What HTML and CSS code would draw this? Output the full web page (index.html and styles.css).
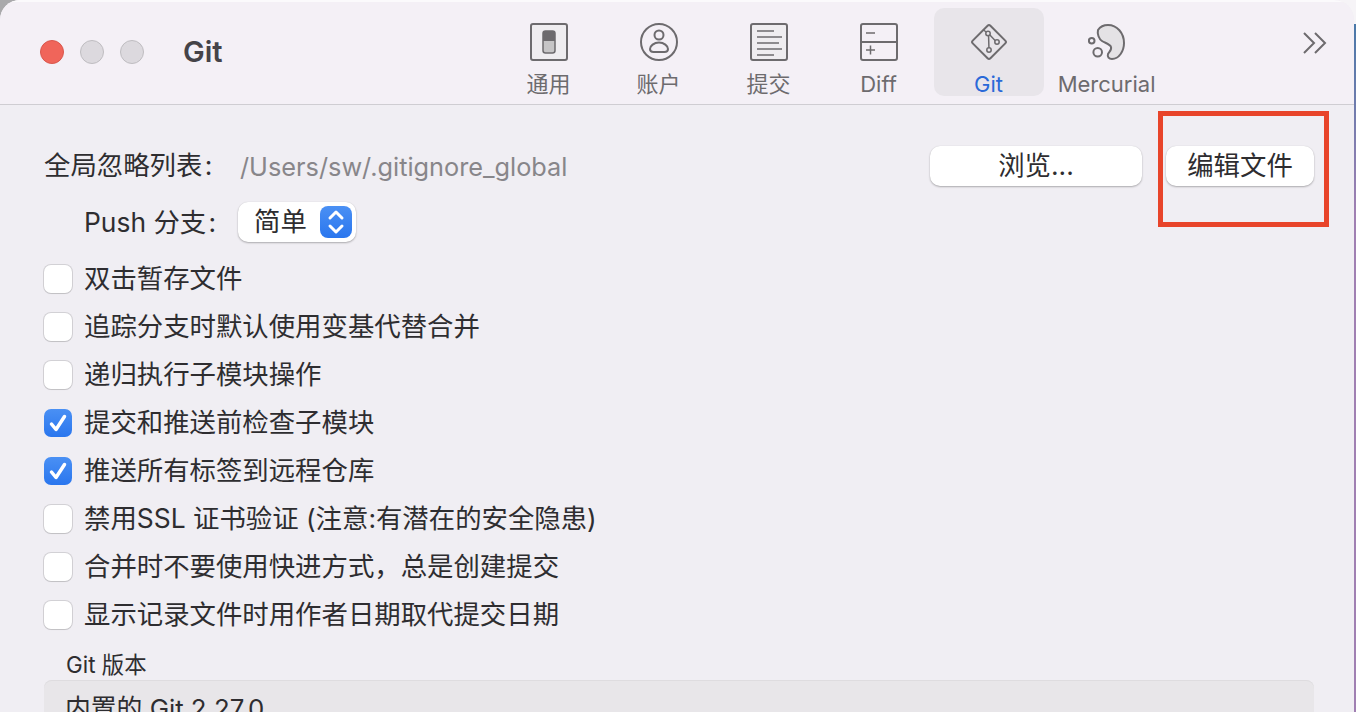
FILE: index.html
```html
<!DOCTYPE html>
<html lang="zh-CN">
<head>
    <meta charset="UTF-8">
    <title>Git</title>
    <link rel="stylesheet" href="styles.css">
</head>
<body>
    <div class="window">
        <header class="toolbar">
            <div class="lights">
                <span class="light light-close"></span>
                <span class="light"></span>
                <span class="light"></span>
            </div>
            <div class="window-title">Git</div>
            <nav class="tabs">
                <div class="tab">
                    <svg class="tab-icon" viewBox="0 0 38 38">
                        <rect x="1" y="1" width="36" height="36" rx="2" fill="#efedf0" stroke="#6d6b6e" stroke-width="2"/>
                        <rect x="13" y="8" width="12" height="22" rx="2.5" fill="#c6c5c6" stroke="#6d6b6e" stroke-width="1.5"/>
                        <path d="M13 18V10.5A2.5 2.5 0 0 1 15.500 8h7a2.500 2.500 0 0 1 2.500 2.500V18z" fill="#6d6b6e"/>
                    </svg>
                    <span class="tab-label">通用</span>
                </div>
                <div class="tab">
                    <svg class="tab-icon" viewBox="0 0 38 38" fill="none" stroke="#6d6b6e" stroke-width="2">
                        <circle cx="19" cy="19" r="18"/>
                        <circle cx="19" cy="12" r="4.500"/>
                        <path d="M19 19.500c-5 0-9 3.500-9 6.500 0 2 1.500 3 3.500 3h11c2 0 3.500-1 3.500-3 0-3-4-6.500-9-6.500z"/>
                    </svg>
                    <span class="tab-label">账户</span>
                </div>
                <div class="tab">
                    <svg class="tab-icon" viewBox="0 0 38 38" fill="none" stroke="#6d6b6e" stroke-width="2">
                        <rect x="1" y="1" width="36" height="36" rx="2" fill="#efedf0"/>
                        <path d="M7 8h17M7 14h25M7 20h22M7 26h25M7 32h17" stroke-width="1.500"/>
                    </svg>
                    <span class="tab-label">提交</span>
                </div>
                <div class="tab">
                    <svg class="tab-icon" viewBox="0 0 38 38" fill="none" stroke="#6d6b6e" stroke-width="2">
                        <rect x="1" y="1" width="36" height="36" rx="2"/>
                        <path d="M1 19h36"/>
                        <path d="M6 10h9M6 27h9M10.500 22.500v9" stroke-width="1.500"/>
                    </svg>
                    <span class="tab-label">Diff</span>
                </div>
                <div class="tab tab-active">
                    <svg class="tab-icon" viewBox="0 0 38 38" fill="none" stroke="#6d6b6e" stroke-width="2">
                        <rect x="6.500" y="6.500" width="25" height="25" rx="2" transform="rotate(45 19 19)"/>
                        <path d="M13 6.500l5 4M18.500 10.500l.5 16.500M18.500 10.500l8 8.500" stroke-width="1.500"/>
                        <circle cx="18" cy="10.500" r="2.200" fill="#e8e5ea" stroke-width="1.500"/>
                        <circle cx="27" cy="19" r="2.200" fill="#e8e5ea" stroke-width="1.500"/>
                        <circle cx="19" cy="27" r="2.200" fill="#e8e5ea" stroke-width="1.500"/>
                    </svg>
                    <span class="tab-label">Git</span>
                </div>
                <div class="tab tab-wide">
                    <svg class="tab-icon" viewBox="0 0 38 38" fill="none" stroke="#6d6b6e" stroke-width="2">
                        <path d="M10 7C12 4 16 2 20 2c9 0 16 8 16 18 0 8-5 16-12 16-3 0-5-2-4-5 1-2 4-4 3-7-1-3-6-4-9-6-3-2-5-7-4-11z" fill="#e4e2e5"/>
                        <circle cx="3.700" cy="17.700" r="2.800"/>
                        <circle cx="9.700" cy="29.300" r="4.300"/>
                    </svg>
                    <span class="tab-label">Mercurial</span>
                </div>
            </nav>
            <svg class="more" viewBox="0 0 26 24" fill="none" stroke="#6d6b6e" stroke-width="2">
                <path d="M2 2l10 10L2 22M13 2l10 10-10 10"/>
            </svg>
        </header>

        <main class="settings">
            <div class="row-ignore">
                <span class="field-label"><span class="cjk-text">全局忽略列表&#8202;:</span></span>
                <span class="path">/Users/sw/.gitignore_global</span>
                <button class="button button-browse"><span class="cjk-text">浏览...</span></button>
                <button class="button button-edit"><span class="cjk-text">编辑文件</span></button>
            </div>
            <div class="row-push">
                <span class="field-label"><span class="cjk-text">Push 分支&#8202;:</span></span>
                <div class="select">
                    <span class="cjk-text">简单</span>
                    <span class="stepper">
                        <svg viewBox="0 0 32 32" fill="none" stroke="#fff" stroke-width="3" stroke-linecap="round" stroke-linejoin="round">
                            <path d="M10 12l6-6 6 6M10 20l6 6 6-6"/>
                        </svg>
                    </span>
                </div>
            </div>
            <ul class="options">
                <li class="option"><span class="check"></span><span class="cjk-text">双击暂存文件</span></li>
                <li class="option"><span class="check"></span><span class="cjk-text">追踪分支时默认使用变基代替合并</span></li>
                <li class="option"><span class="check"></span><span class="cjk-text">递归执行子模块操作</span></li>
                <li class="option"><span class="check check-on"><svg viewBox="0 0 28 28" fill="none" stroke="#fff" stroke-width="3.500" stroke-linecap="round" stroke-linejoin="round"><path d="M7.500 15l4.500 5.500 8.500-13"/></svg></span><span class="cjk-text">提交和推送前检查子模块</span></li>
                <li class="option"><span class="check check-on"><svg viewBox="0 0 28 28" fill="none" stroke="#fff" stroke-width="3.500" stroke-linecap="round" stroke-linejoin="round"><path d="M7.500 15l4.500 5.500 8.500-13"/></svg></span><span class="cjk-text">推送所有标签到远程仓库</span></li>
                <li class="option"><span class="check"></span><span class="cjk-text">禁用SSL 证书验证 (注意:有潜在的安全隐患)</span></li>
                <li class="option"><span class="check"></span><span class="cjk-text">合并时不要使用快进方式，总是创建提交</span></li>
                <li class="option"><span class="check"></span><span class="cjk-text">显示记录文件时用作者日期取代提交日期</span></li>
            </ul>
            <div class="version-title">Git 版本</div>
            <div class="version-box">内置的 Git 2.27.0</div>
        </main>

        <div class="callout"></div>
    </div>
</body>
</html>
```

FILE: styles.css
```css
* {
    box-sizing: border-box;
}

html, body {
    height: 100%;
}

body {
    margin: 0;
    overflow: hidden;
    background:
        linear-gradient(90deg, #a9a9ab 0 50%, #f6f4f7 50%) top / 100% 24px no-repeat,
        linear-gradient(#3f78a8 0, #a07fb2 30%, #a07fb2 100%);
    font-family: Inter, "Noto Sans CJK SC", sans-serif;
    color: #2e2d30;
}

.window {
    position: relative;
    width: 1354px;
    height: 712px;
    overflow: hidden;
    background: #f0eef3;
    border-top-left-radius: 20px;
    border-top-right-radius: 20px;
}

/* toolbar */
.toolbar {
    display: flex;
    align-items: flex-start;
    height: 105px;
    background: #f4f0f6;
    border-top: 2px solid #fbfafc;
    border-bottom: 1px solid #cfcdd2;
}

.lights {
    display: flex;
    gap: 16px;
    margin: 38px 0 0 40px;
}

.light {
    width: 24px;
    height: 24px;
    border-radius: 50%;
    background: #dcd9de;
    border: 1px solid #bfbdc1;
}

.light-close {
    background: #f0655a;
    border-color: #d9574d;
}

.window-title {
    margin: 30px 0 0 39px;
    font-size: 29px;
    line-height: 40px;
    font-weight: 600;
    color: #454348;
}

.tabs {
    display: flex;
    margin: 6px 0 0 271px;
}

.tab {
    display: flex;
    flex-direction: column;
    align-items: center;
    width: 110px;
    height: 88px;
    padding-top: 15px;
    border-radius: 10px;
}

.tab-wide {
    width: 126px;
}

.tab-active {
    background: #e8e5ea;
}

.tab-icon {
    width: 38px;
    height: 38px;
    flex: none;
}

.tab-label {
    margin-top: 8px;
    font-size: 22px;
    line-height: 30px;
    color: #6d6b6e;
    white-space: nowrap;
}

.tab-active .tab-label {
    color: #2a69d8;
}

.more {
    width: 26px;
    height: 24px;
    margin: 29px 0 0 132px;
}

/* settings */
.settings {
    padding: 41px 40px 0 44px;
    font-size: 26.400px;
}

/* Noto CJK sits lower than the system font of the reference */
.cjk-text {
    position: relative;
    top: -3px;
}

.row-ignore, .row-push {
    display: flex;
    align-items: center;
    height: 40px;
}

.row-push {
    margin-top: 16px;
}

.field-label {
    width: 196px;
    flex: none;
    white-space: nowrap;
}

.row-push .field-label {
    width: 194px;
    padding-left: 40px;
}

.row-push .field-label .cjk-text {
    top: -2px;
}

.path {
    flex: 1;
    color: #88868a;
    font-size: 25.300px;
    white-space: nowrap;
}

.button {
    height: 40px;
    padding: 0;
    border: none;
    border-radius: 10px;
    background: #fff;
    color: #2e2d30;
    font: inherit;
    box-shadow: 0 1px 2px rgba(0, 0, 0, 0.28), 0 0 1px rgba(0, 0, 0, 0.12);
}

.button-browse {
    width: 212px;
}

.button-edit {
    width: 148px;
    margin-left: 24px;
}

.select {
    display: flex;
    align-items: center;
    justify-content: space-between;
    width: 118px;
    height: 40px;
    padding: 0 4px 0 16px;
    border-radius: 10px;
    background: #fff;
    box-shadow: 0 1px 2px rgba(0, 0, 0, 0.28), 0 0 1px rgba(0, 0, 0, 0.12);
}

.stepper {
    width: 32px;
    height: 32px;
    border-radius: 8px;
    background: linear-gradient(#4a90f4, #2a76ee);
}

.stepper svg {
    display: block;
}

.options {
    margin: 13px 0 0;
    padding: 0;
    list-style: none;
}

.option {
    display: flex;
    align-items: center;
    gap: 12px;
    height: 48px;
    white-space: pre;
}

.check {
    width: 28px;
    height: 28px;
    flex: none;
    border-radius: 7px;
    background: #fff;
    box-shadow: 0 0 0 1px rgba(0, 0, 0, 0.12), 0 1px 1px rgba(0, 0, 0, 0.08);
}

.check svg {
    display: block;
}

.check-on {
    background: linear-gradient(#4a90f4, #2a76ee);
    box-shadow: none;
}

.version-title {
    margin: 12px 0 0 22px;
    font-size: 22.400px;
    line-height: 28px;
}

.version-box {
    height: 80px;
    margin-top: 1px;
    padding: 11px 21px;
    border-radius: 8px;
    background: #e8e6e9;
    box-shadow: inset 0 1px 0 #dedcdf;
    font-size: 25.800px;
    line-height: 36px;
}

/* red annotation drawn over the screenshot */
.callout {
    position: absolute;
    left: 1158px;
    top: 111px;
    width: 171px;
    height: 116px;
    border: 5px solid #e8442a;
}
```
